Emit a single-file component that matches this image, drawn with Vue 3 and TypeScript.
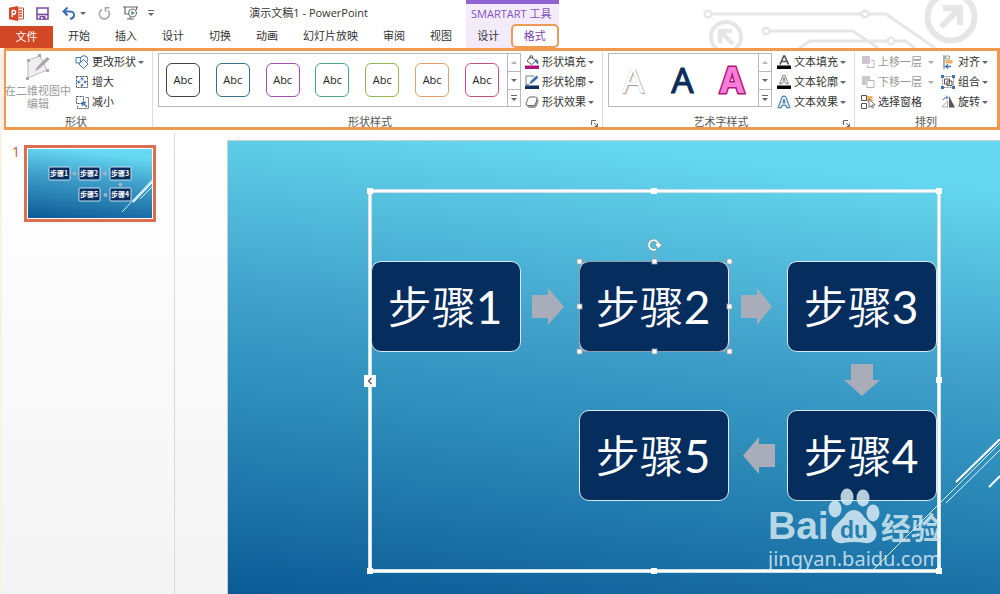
<script setup lang="ts">
interface Command { icon: string; label: string; menu?: boolean; disabled?: boolean }
interface Step { name: string; index: number; x: number; y: number }

const tabs: string[] = ['开始', '插入', '设计', '切换', '动画', '幻灯片放映', '审阅', '视图']

const shapeEdit: Command[] = [
  { icon: 'change', label: '更改形状', menu: true },
  { icon: 'larger', label: '增大' },
  { icon: 'smaller', label: '减小' },
]
const shapeFormat: Command[] = [
  { icon: 'fill', label: '形状填充', menu: true },
  { icon: 'outline', label: '形状轮廓', menu: true },
  { icon: 'effect', label: '形状效果', menu: true },
]
const textFormat: Command[] = [
  { icon: 'tfill', label: '文本填充', menu: true },
  { icon: 'toutline', label: '文本轮廓', menu: true },
  { icon: 'teffect', label: '文本效果', menu: true },
]
const layers: Command[] = [
  { icon: 'forward', label: '上移一层', menu: true, disabled: true },
  { icon: 'backward', label: '下移一层', menu: true, disabled: true },
  { icon: 'pane', label: '选择窗格' },
]
const arrange: Command[] = [
  { icon: 'align', label: '对齐', menu: true },
  { icon: 'group', label: '组合', menu: true },
  { icon: 'rotate', label: '旋转', menu: true },
]
const swatches: string[] = ['black', 'blue', 'purple', 'teal', 'green', 'orange', 'pink']
const artStyles: string[] = ['plain', 'navy', 'magenta']

const steps: Step[] = [
  { name: '步骤', index: 1, x: 1, y: 70 },
  { name: '步骤', index: 2, x: 209, y: 70 },
  { name: '步骤', index: 3, x: 417, y: 70 },
  { name: '步骤', index: 4, x: 417, y: 219 },
  { name: '步骤', index: 5, x: 209, y: 219 },
]
const miniSteps: Step[] = [
  { name: '步骤', index: 1, x: 21, y: 18 },
  { name: '步骤', index: 2, x: 51, y: 18 },
  { name: '步骤', index: 3, x: 82, y: 18 },
  { name: '步骤', index: 4, x: 82, y: 39 },
  { name: '步骤', index: 5, x: 51, y: 39 },
]
const frameHandles: number[][] = [[0, 0], [284, 0], [569, 0], [569, 189], [569, 380], [284, 380], [0, 380]]
const nodeHandles: number[][] = [[209, 70], [284, 70], [359, 70], [359, 115], [359, 160], [284, 160], [209, 160], [209, 115]]
</script>

<template>
  <div class="app">
    <svg class="sprite" aria-hidden="true">
      <symbol id="change" viewBox="0 0 14 14">
        <path d="M1 2.500h5v5.500H1z" fill="#fff" stroke="#3f74b0" />
        <circle cx="9" cy="4.500" r="3.800" fill="#fff" stroke="#3f74b0" />
        <path d="M8.500 4.500l4.500 4.500-4.500 4.500L4 9z" fill="#fff" stroke="#3f74b0" />
      </symbol>
      <symbol id="larger" viewBox="0 0 14 14">
        <path d="M1.500 1.500h11v11h-11z" fill="none" stroke="#444" stroke-dasharray="2 1" />
        <path d="M7 3v2.500M7 8.500V11M3 7h2.500M8.500 7H11" stroke="#3f74b0" />
        <path d="M7 2l2 2.300H5zM7 12l2-2.300H5zM2 7l2.300-2v4zM12 7L9.700 5v4z" fill="#3f74b0" />
      </symbol>
      <symbol id="smaller" viewBox="0 0 14 14">
        <path d="M1.500 1.500h7v7h-7z" fill="none" stroke="#444" stroke-dasharray="2 1" />
        <path d="M10.500 2.500h3v11h-11v-3" fill="none" stroke="#888" />
        <path d="M12 12L8 8M7.500 11V7.500H11" fill="none" stroke="#3f74b0" stroke-width="1.500" />
      </symbol>
      <symbol id="fill" viewBox="0 0 14 14">
        <path d="M5.500 1.500L11 6 6.500 9.500 2 6z" fill="#fff" stroke="#555" />
        <path d="M5 4V1.500a1.300 1.300 0 0 1 2.500 0V4" fill="none" stroke="#555" />
        <path d="M10.500 4c2.500.5 3.500 2.500 2.500 5.500-2-1-2.500-3-2.500-5.500z" fill="#3f74b0" />
        <path d="M0 10.500h14V14H0z" fill="#b0157f" />
      </symbol>
      <symbol id="outline" viewBox="0 0 14 14">
        <path d="M9 1H1v8.500h3" fill="none" stroke="#777" />
        <path d="M4.500 9l1-3 6-5.500L13.500 2.500l-6 5.500z" fill="#3f74b0" />
        <path d="M0 10.500h14V14H0z" fill="#0b2f61" />
      </symbol>
      <symbol id="effect" viewBox="0 0 14 14">
        <path d="M2 11q1 2 3 2h4q2 0 3-2l1.500-4q.5-2-1-3.500z" fill="#999" />
        <path d="M5 2h5.500q2 0 1.500 2L10.500 9q-.5 1.500-2 1.500H3Q.5 10.500 1 8.500L3 3.500Q3.500 2 5 2z" fill="#fff" stroke="#666" />
      </symbol>
      <symbol id="tfill" viewBox="0 0 14 14">
        <path d="M3 9.500L6.800 1h.9l3.800 8.500M4.500 6.500h5.500" fill="none" stroke="#555" stroke-width="1.700" />
        <path d="M0 10.500h14V14H0z" fill="#000" />
      </symbol>
      <symbol id="toutline" viewBox="0 0 14 14">
        <path d="M2.500 9L6 .5h2L11.500 9H9.500L8.700 7H5.300L4.500 9zM6 5.300h2L7 2.500z" fill="#fff" stroke="#666" stroke-width=".8" />
        <path d="M0 10.500h14V14H0z" fill="#000" />
      </symbol>
      <symbol id="teffect" viewBox="0 0 14 14">
        <path d="M1.500 12.500L5.500 1.500h3l4 11H9.800L9 10H5l-.8 2.500zM5.800 8h2.400L7 4z" fill="#fff" stroke="#8ab6e4" stroke-width="2" />
        <path d="M1.500 12.500L5.500 1.500h3l4 11H9.800L9 10H5l-.8 2.500zM5.800 8h2.400L7 4z" fill="#fff" stroke="#3f74b0" stroke-width=".9" />
      </symbol>
      <symbol id="forward" viewBox="0 0 14 14">
        <path d="M10 5.500h3v7H6.500V10" fill="none" stroke="#b9b3bb" />
        <path d="M1 1h8v8H1z" fill="#cfc5d0" />
      </symbol>
      <symbol id="backward" viewBox="0 0 14 14">
        <path d="M1 1h8v4H5v5H1z" fill="#cfc5d0" />
        <path d="M6 5.500h7v7H6z" fill="#fff" stroke="#b9b3bb" />
      </symbol>
      <symbol id="pane" viewBox="0 0 14 14">
        <path d="M6 1h5.500v6H6z" fill="#eeb367" />
        <path d="M.5.500h5v5h-5zM.5 8.500h5v5h-5z" fill="#fff" stroke="#555" />
        <path d="M8 4v8.500l2-2 1.200 2.500 1.300-.6-1.200-2.400H14z" fill="#fff" stroke="#555" stroke-width=".8" />
      </symbol>
      <symbol id="align" viewBox="0 0 14 14">
        <path d="M3 0v14" stroke="#666" />
        <path d="M4.500 1h4v3h-4z" fill="#fff" stroke="#999" />
        <path d="M4.500 5h7v3.500h-7z" fill="#eeb367" />
        <path d="M10 11.500H5M7 9.500l-2.500 2L7 13.500" fill="none" stroke="#3f74b0" stroke-width="1.300" />
      </symbol>
      <symbol id="group" viewBox="0 0 14 14">
        <path d="M1.500 1.500h11v11h-11z" fill="none" stroke="#888" stroke-dasharray="2 1" />
        <path d="M3.500 4h5v5h-5zM6 6h5v4.500H6z" fill="none" stroke="#555" />
        <path d="M0 0h3v3H0zM11 0h3v3h-3zM0 11h3v3H0zM11 11h3v3h-3z" fill="#3f74b0" />
      </symbol>
      <symbol id="rotate" viewBox="0 0 14 14">
        <path d="M8 1l6 11.500H8z" fill="#555" />
        <path d="M6.500 6v6H1z" fill="#fff" stroke="#aaa" />
        <path d="M2 5q1-3 4.500-2.500M5 .5l2 2-2 2" fill="none" stroke="#3f74b0" />
      </symbol>
    </svg>

    <header class="header">
      <div class="main-head">
        <div class="title-bar">
          <div class="qat">
            <svg class="logo" width="15" height="15" viewBox="0 0 15 15" role="img" aria-label="PowerPoint">
              <path d="M9 2h5.500v11H9z" fill="#fff" stroke="#d24726" />
              <path d="M10 5h3M10 7.500h3M10 10h3" stroke="#d24726" stroke-width="1.300" />
              <path d="M0 1.700L9 0v15L0 13.300z" fill="#d24726" />
              <path d="M3.300 11V4.500h1.500q1.900 0 1.900 1.800T4.800 8.200H3.300" fill="none" stroke="#fff" stroke-width="1.400" />
            </svg>
            <button class="tool save" type="button" aria-label="保存">
              <svg width="13" height="13" viewBox="0 0 13 13">
                <path d="M1 1h11v11H1z" fill="#fff" stroke="#7b4fa0" stroke-width="1.600" />
                <path d="M1 7.500h11" stroke="#7b4fa0" stroke-width="1.800" />
                <path d="M3.500 9h6v3.500h-6z" fill="#7b4fa0" />
                <path d="M5 10h1.500v2H5z" fill="#fff" />
              </svg>
            </button>
            <button class="tool undo" type="button" aria-label="撤消">
              <svg width="14" height="13" viewBox="0 0 14 13">
                <path d="M1.500 4.500H8q4.500.3 4 4-.5 3-4 3.500M5.500.5l-4 4 4 4" fill="none" stroke="#3b6fb5" stroke-width="2" />
              </svg>
            </button>
            <i class="caret"></i>
            <button class="tool redo" type="button" aria-label="重复">
              <svg width="13" height="13" viewBox="0 0 13 13">
                <path d="M4 2.500a5 5 0 1 0 6 1M11.500.8H7.500v4" fill="none" stroke="#a5a5a5" stroke-width="1.600" />
              </svg>
            </button>
            <button class="tool show" type="button" aria-label="从头开始放映">
              <svg width="15" height="14" viewBox="0 0 15 14">
                <path d="M0 1h15M2 1v7h4M13.500 1v3M4 13h7M7 11v2" fill="none" stroke="#666" stroke-width="1.200" />
                <circle cx="9.500" cy="7" r="4" fill="#fff" stroke="#666" />
                <path d="M8.300 4.700L12 7 8.300 9.300z" fill="#45a27d" />
              </svg>
            </button>
            <button class="tool more" type="button" aria-label="自定义快速访问工具栏"><span class="bar"></span><i class="caret"></i></button>
          </div>
          <div class="doc-title">演示文稿1 - PowerPoint</div>
        </div>
        <nav class="tabs">
          <button class="file" type="button">文件</button>
          <button v-for="t in tabs" :key="t" class="tab" type="button">{{ t }}</button>
        </nav>
      </div>
      <div class="context">
        <div class="context-title">SMARTART 工具</div>
        <div class="context-tabs">
          <button class="tab" type="button">设计</button>
          <button class="tab active" type="button">格式</button>
        </div>
      </div>
      <div class="decor">
        <svg width="300" height="48" viewBox="0 0 300 48" fill="none" stroke="#e6e6e6" aria-hidden="true">
          <g stroke-width="3">
            <path d="M12 14h150M169 14h17l49 34M70 31h83l25 17M99 48l11-7h78M195 41h10l10 7" />
          </g>
          <g stroke-width="2.500">
            <circle cx="8" cy="14" r="3.300" /><circle cx="165" cy="14" r="3.300" />
            <circle cx="66" cy="31" r="3.300" /><circle cx="191" cy="41" r="3.300" />
          </g>
          <circle cx="26" cy="37" r="15" stroke-width="4" />
          <path d="M33 44L21 32M20 43V31h12" stroke-width="4.500" />
          <circle cx="251" cy="17" r="23.500" stroke-width="6" />
          <path d="M241 27l18-18M243 8h17v17" stroke-width="6" />
        </svg>
      </div>
    </header>

    <section class="ribbon">
      <div class="group g-shape">
        <div class="body">
          <button class="big" type="button" disabled>
            <svg width="24" height="27" viewBox="0 0 24 27">
              <path d="M2 6L14 2l7 14L2 24z" fill="#f1edf3" stroke="#bbb" />
              <path d="M9 17l2-4L21 3l3 2L13 15z" fill="#aaa" />
              <path d="M1 5h3v3H1zM12 0h3v3h-3zM20 15h3v3h-3zM0 23h3v3H0z" fill="#aaa" />
            </svg>
            <span>在二维视图中<br>编辑</span>
          </button>
          <div class="commands">
            <button v-for="c in shapeEdit" :key="c.label" class="cmd" type="button">
              <svg class="icon"><use :href="'#' + c.icon" /></svg><span>{{ c.label }}</span><i v-if="c.menu" class="caret"></i>
            </button>
          </div>
        </div>
        <div class="caption">形状</div>
      </div>

      <div class="group g-style">
        <div class="body">
          <div class="gallery">
            <div class="items">
              <button v-for="s in swatches" :key="s" class="swatch" :class="s" type="button">Abc</button>
            </div>
            <div class="scroller">
              <button type="button" aria-label="上一行" disabled><i class="caret up"></i></button>
              <button type="button" aria-label="下一行"><i class="caret"></i></button>
              <button type="button" aria-label="其他样式"><span class="bar"></span><i class="caret"></i></button>
            </div>
          </div>
          <div class="commands">
            <button v-for="c in shapeFormat" :key="c.label" class="cmd" type="button">
              <svg class="icon"><use :href="'#' + c.icon" /></svg><span>{{ c.label }}</span><i class="caret"></i>
            </button>
          </div>
        </div>
        <div class="caption">形状样式</div>
        <button class="launcher" type="button" aria-label="设置形状格式">
          <svg width="7" height="7" viewBox="0 0 7 7"><path d="M.5 5V.500H5M3 3l3 3M6.500 3.500v3h-3" fill="none" stroke="#666" /></svg>
        </button>
      </div>

      <div class="group g-art">
        <div class="body">
          <div class="gallery">
            <div class="items art">
              <button v-for="a in artStyles" :key="a" class="letter" :class="a" type="button">A</button>
            </div>
            <div class="scroller">
              <button type="button" aria-label="上一行" disabled><i class="caret up"></i></button>
              <button type="button" aria-label="下一行"><i class="caret"></i></button>
              <button type="button" aria-label="其他样式"><span class="bar"></span><i class="caret"></i></button>
            </div>
          </div>
          <div class="commands">
            <button v-for="c in textFormat" :key="c.label" class="cmd" type="button">
              <svg class="icon"><use :href="'#' + c.icon" /></svg><span>{{ c.label }}</span><i class="caret"></i>
            </button>
          </div>
        </div>
        <div class="caption">艺术字样式</div>
        <button class="launcher" type="button" aria-label="设置文本效果格式">
          <svg width="7" height="7" viewBox="0 0 7 7"><path d="M.5 5V.500H5M3 3l3 3M6.500 3.500v3h-3" fill="none" stroke="#666" /></svg>
        </button>
      </div>

      <div class="group g-arrange">
        <div class="body">
          <div class="commands wide">
            <button v-for="c in layers" :key="c.label" class="cmd" type="button" :disabled="c.disabled">
              <svg class="icon"><use :href="'#' + c.icon" /></svg><span>{{ c.label }}</span><i v-if="c.menu" class="caret"></i>
            </button>
          </div>
          <div class="commands">
            <button v-for="c in arrange" :key="c.label" class="cmd" type="button">
              <svg class="icon"><use :href="'#' + c.icon" /></svg><span>{{ c.label }}</span><i class="caret"></i>
            </button>
          </div>
        </div>
        <div class="caption">排列</div>
      </div>
    </section>

    <main class="workspace">
      <aside class="slides">
        <span class="number">1</span>
        <button class="thumb" type="button" aria-label="幻灯片 1">
          <svg viewBox="0 0 124 69" width="124" height="69">
            <g fill="#a9afc0">
              <circle cx="46.500" cy="24.500" r="2" /><circle cx="77" cy="24.500" r="2" />
              <circle cx="92.500" cy="35.500" r="2" /><circle cx="77.500" cy="46" r="2" />
            </g>
            <g v-for="s in miniSteps" :key="s.index">
              <rect :x="s.x" :y="s.y" width="21" height="13" rx="1" fill="#082c5e" stroke="#c7e2ee" />
              <text :x="s.x + 10" :y="s.y + 9" text-anchor="middle">{{ s.name }}{{ s.index }}</text>
            </g>
            <path d="M94 63l30-32M108 50l16-16M112 50l12-12" stroke="#d7f2f7" fill="none" />
            <path d="M105 53l19-20" stroke="#d7f2f7" stroke-width="2" />
          </svg>
        </button>
      </aside>
      <div class="canvas">
        <div class="slide">
          <svg class="rays" width="126" height="132" viewBox="0 0 126 132" fill="none" stroke="#e6f5fa" aria-hidden="true">
            <path d="M0 130L126 4M72 64l54-53" />
            <path d="M82 43L126 0M115 48l11-11" stroke="#fff" stroke-width="2" />
          </svg>
          <div class="diagram">
            <div v-for="s in steps" :key="s.index" class="step" :style="{ left: s.x + 'px', top: s.y + 'px' }">{{ s.name }}<span class="digit">{{ s.index }}</span></div>
            <svg class="overlay" width="569" height="380" viewBox="0 0 569 380" aria-hidden="true">
              <g fill="#a9adba">
                <path d="M162 104h16v-7l16 18.500-16 18.500v-7h-16z" />
                <path d="M371 104h16v-7l15 18.500-15 18.500v-7h-16z" />
                <path d="M481 173h22v16h7l-18 16-18-16h7z" />
                <path d="M405 253h-16v-7l-16 18.500 16 18.500v-7h16z" />
              </g>
              <rect width="569" height="380" fill="none" stroke="#9cc3d0" stroke-width="4" />
              <rect width="569" height="380" fill="none" stroke="#fff" stroke-width="3" />
              <rect x="209.500" y="70.500" width="150" height="90" fill="none" stroke="#8f9da8" />
              <path d="M284.500 60v10" stroke="#8fa9b3" />
              <g fill="none" stroke-linejoin="round">
                <path d="M286 58.300a4.800 4.800 0 1 1 2.500-4M286.500 53.500h4l-2 2.500z" stroke="#7fa6b3" stroke-width="3.500" />
                <path d="M286 58.300a4.800 4.800 0 1 1 2.500-4M286.500 53.500h4l-2 2.500z" stroke="#fff" stroke-width="1.600" />
              </g>
              <rect v-for="(h, i) in frameHandles" :key="'f' + i" :x="h[0] - 3" :y="h[1] - 3" width="6" height="6" fill="#fff" />
              <rect v-for="(h, i) in nodeHandles" :key="'n' + i" :x="h[0] - 2" :y="h[1] - 2" width="5" height="5" fill="#fff" stroke="#8f9da8" stroke-width=".8" />
              <rect x="-6" y="184" width="12" height="12" fill="#fff" />
              <path d="M1.500 187L-1.500 190l3 3" fill="none" stroke="#555" stroke-width="1.300" />
            </svg>
          </div>
          <div class="watermark">
            <div class="brand">
              <span class="bai">Bai</span>
              <svg width="52" height="56" viewBox="0 0 52 56" role="img" aria-label="du">
                <g fill="currentColor">
                  <ellipse cx="7" cy="21" rx="6.500" ry="8.500" /><ellipse cx="19" cy="9" rx="6.500" ry="8.500" />
                  <ellipse cx="35" cy="10" rx="6.500" ry="8.500" /><ellipse cx="45" cy="25" rx="6.500" ry="8.500" />
                  <path d="M26 22q6 0 10 7l8 8q6 6 4 12-3 7-11 6-11-2-22 0-8 1-11-6-2-6 4-12l8-8q4-7 10-7z" />
                </g>
                <text x="26" y="50" text-anchor="middle">du</text>
              </svg>
              <span class="jy">经验</span>
            </div>
            <div class="url">jingyan.baidu.com</div>
          </div>
        </div>
      </div>
    </main>
  </div>
</template>

<style>
html, body, #app { height: 100%; margin: 0; }
</style>

<style scoped>
.app {
  display: flex; flex-direction: column; height: 100vh; overflow: hidden; background: #fff; color: #333;
  font: 11px/16px "Open Sans", "Noto Sans CJK SC", sans-serif;
}
.app * { box-sizing: border-box; }
button { font: inherit; color: inherit; background: none; border: 0; padding: 0; margin: 0; }
.sprite { position: absolute; width: 0; height: 0; }
svg { display: block; flex: none; }
.caret { flex: none; width: 0; height: 0; border: 3px solid transparent; border-top-color: #666; border-bottom: 0; }
.caret.up { border-top: 0; border-bottom: 3px solid #b5b5b5; }
.bar { display: block; width: 6px; height: 1px; background: #666; }

.header { display: flex; height: 48px; flex: none; }
.main-head { display: flex; flex-direction: column; flex: none; width: 466px; }
.title-bar { display: flex; align-items: center; height: 26px; padding: 0 98px 0 9px; }
.qat { display: flex; align-items: center; }
.save { margin-left: 12px; }
.undo { margin: 0 4px 0 13px; }
.redo { margin-left: 12px; }
.show { margin-left: 12px; }
.more { margin-left: 10px; display: grid; gap: 2px; }
.doc-title { margin-left: auto; white-space: nowrap; font-size: 11px; }
.tabs { display: flex; height: 22px; }
.tab { padding: 0 12px 2px; margin-right: 1px; white-space: nowrap; }
.file { width: 53px; margin-right: 3px; background: #d24726; color: #fff; }
.context { flex: none; width: 93px; background: #f3ebfa; border-top: 4px solid #9262d2; color: #8453bf; }
.context-title { height: 20px; line-height: 20px; padding-left: 5px; white-space: nowrap; }
.context-tabs { display: flex; height: 24px; color: #333; }
.context-tabs .tab { flex: 1; padding: 0; margin: 0; }
.context-tabs .active { background: #fff; color: #7a3fae; border: 2px solid #ee9a55; border-radius: 5px; }
.decor { flex: 1; display: flex; justify-content: flex-end; overflow: hidden; }

.ribbon {
  display: flex; flex: none; height: 82px; margin-left: 4px; background: #fff;
  border: 3px solid #f0994f; border-width: 3px 3px 3px 2px; box-shadow: -4px 0 0 #fdf0e7, 0 2px 0 #f6d9c2;
}
.group { position: relative; display: flex; flex-direction: column; flex: none; border-right: 1px solid #ddd; }
.g-shape { width: 147px; }
.g-style { width: 450px; }
.g-art { width: 252px; }
.g-arrange { flex: 1 0 0; border-right: 0; padding-left: 6px; }
.body { display: flex; height: 62px; }
.caption { line-height: 18px; text-align: center; color: #555; padding-right: 15px; height: 14px; }
.g-shape .caption, .g-arrange .caption { padding-right: 6px; }
.big { width: 64px; display: flex; flex-direction: column; align-items: center; gap: 3px; padding-top: 3px; color: #9a9a9a; line-height: 13px; white-space: nowrap; }
.g-shape .commands { margin-left: 5px; }
.commands { display: grid; grid-auto-rows: 20px; padding-top: 1px; align-content: start; }
.cmd { display: flex; align-items: center; white-space: nowrap; text-align: left; }
.cmd:disabled { color: #999; }
.cmd:disabled .caret { border-top-color: #aaa; }
.icon { width: 14px; height: 14px; margin-right: 3px; }
.cmd .caret { margin-left: 2px; }
.wide { margin-right: 7px; }
.wide .cmd .caret { margin-left: 6px; }
.gallery { display: flex; height: 54px; margin: 2px 4px 0 5px; border: 1px solid #b9b9b9; }
.items { flex: 1; display: flex; align-items: center; justify-content: space-between; padding: 0 8px 0 7px; }
.g-style .gallery { width: 363px; }
.g-art .gallery { width: 164px; margin-right: 5px; }
.swatch {
  width: 34px; height: 34px; background: #fff; border: 1px solid; border-radius: 6px; color: #222;
  font-family: "Open Sans", sans-serif; text-align: center;
}
.black { border-color: #444; }
.blue { border-color: #3d6d8e; }
.purple { border-color: #a14fb0; }
.teal { border-color: #45a88b; }
.green { border-color: #94b754; }
.orange { border-color: #e39f6e; }
.pink { border-color: #c94f85; }
.items.art { padding: 0 11px 0 9px; }
.letter { width: 30px; height: 48px; font: 35px/48px "Noto Sans", sans-serif; text-align: center; }
.plain { color: #fff; text-shadow: 1px 1px 1px #999, 0 0 1px #bbb; }
.navy { color: #0c2c5b; -webkit-text-stroke: 1px #0c2c5b; }
.magenta { color: #f77fd5; -webkit-text-stroke: 3px #b0157f; paint-order: stroke fill; font-weight: 700; }
.scroller { width: 13px; display: grid; grid-template-rows: 1fr 1fr 1fr; border-left: 1px solid #b9b9b9; }
.scroller button { display: flex; flex-direction: column; gap: 2px; align-items: center; justify-content: center; }
.scroller button + button { border-top: 1px solid #b9b9b9; }
.launcher { position: absolute; right: 4px; bottom: 0; }

.workspace { display: flex; flex: 1; min-height: 0; padding-top: 3px; background: linear-gradient(#fff, #f4f4f4); border-left: 2px solid #fdf0e7; }
.slides { display: flex; align-items: flex-start; flex: none; width: 173px; border-right: 1px solid #d9d9d9; padding: 12px 0 0 10px; }
.number { width: 12px; font: 14px/14px "Open Sans", sans-serif; color: #c75a38; }
.thumb { border: 3px solid #dd6f4f; width: 132px; height: 77px; padding: 1px; background: #fff; }
.thumb svg { background: linear-gradient(186deg, #66d8f2 12%, #3f9fca 45%, #0b5a96); }
.thumb text { font: 700 7px "Noto Sans CJK SC", sans-serif; fill: #fff; }
.canvas { flex: 1; padding: 8px 0 0 53px; display: flex; min-width: 0; }
.slide {
  position: relative; flex: 1; overflow: hidden; box-shadow: 0 0 0 1px #c9cdd0;
  background: linear-gradient(186deg, #66d8f2 8%, #5ccae5 17%, #3f9fca 45%, #3090bd 60%, #1a70a6 85%, #0b5a96 100%);
}
.rays { position: absolute; left: 646px; top: 298px; }
.diagram { position: absolute; left: 142px; top: 50px; width: 569px; height: 380px; }
.overlay { position: absolute; inset: 0; overflow: visible; }
.step {
  position: absolute; width: 150px; height: 91px; padding-right: 2px; border: 1px solid #d8ebf4; border-radius: 10px;
  background: #052d5e; color: #fff; text-align: center; white-space: nowrap;
  font: 350 44px/86px "Noto Sans CJK SC", sans-serif;
}
.digit { font: 400 46px/46px Lato, sans-serif; }
.watermark { position: absolute; left: 540px; top: 347px; color: rgba(218, 236, 244, .84); }
.brand { display: flex; align-items: flex-end; height: 56px; }
.bai { width: 60px; font: 700 39px/36px "Liberation Sans", sans-serif; }
.brand text { font: 700 23px "Liberation Sans", sans-serif; fill: #2580b0; }
.jy { margin-left: 1px; font: 700 30px/36px "Noto Sans CJK SC", sans-serif; }
.url { font: 20px/30px "Noto Sans", sans-serif; }
</style>
